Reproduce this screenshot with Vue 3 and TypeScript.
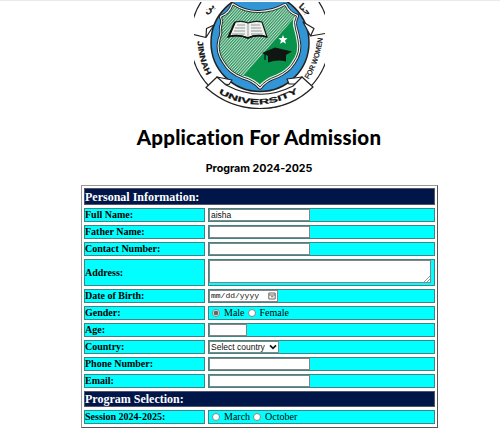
<script setup lang="ts">
import { ref } from 'vue'

type Kind = 'head' | 'text' | 'area' | 'date' | 'radio' | 'short' | 'select'
interface Row {
  label: string
  kind: Kind
  value?: string
  options?: string[]
  checked?: string
}

const rows = ref<Row[]>([
  { label: 'Personal Information:', kind: 'head' },
  { label: 'Full Name:', kind: 'text', value: 'aisha' },
  { label: 'Father Name:', kind: 'text', value: '' },
  { label: 'Contact Number:', kind: 'text', value: '' },
  { label: 'Address:', kind: 'area', value: '' },
  { label: 'Date of Birth:', kind: 'date' },
  { label: 'Gender:', kind: 'radio', options: ['Male', 'Female'], checked: 'Male' },
  { label: 'Age:', kind: 'short', value: '' },
  { label: 'Country:', kind: 'select' },
  { label: 'Phone Number:', kind: 'text', value: '' },
  { label: 'Email:', kind: 'text', value: '' },
  { label: 'Program Selection:', kind: 'head' },
  { label: 'Session 2024-2025:', kind: 'radio', options: ['March', 'October'], checked: '' },
])

const shield =
  'M233 5Q245 13 259 12.5Q273 12.5 285 5.5Q289 14 296.5 16Q293 22 295.5 29Q297 34 298 40Q301 52 293 63Q288 71 277 76Q265 80 260 87Q254 80 243 77Q230 72 224.5 62Q217 52 220 40Q223 33 221.5 27Q224 21 221.5 17Q230 14 233 5Z'
</script>

<template>
  <main class="page">
    <svg class="logo" viewBox="194 2 131 107" width="131" height="107">
      <defs>
        <pattern id="hatch" width="2.1" height="2.1" patternUnits="userSpaceOnUse" patternTransform="rotate(42)">
          <rect width="2.1" height="2.1" fill="#c3e2cf" />
          <rect width="1.15" height="2.1" fill="#2f9560" />
        </pattern>
        <clipPath id="shield"><path :d="shield" /></clipPath>
        <path id="ring-left" d="M197.5 41Q198.5 61 208 78" />
        <path id="ring-right" d="M308.5 79.5Q320 61 323 36" />
        <path id="ring-bottom" d="M218.5 93Q258 116 299 92" />
      </defs>
      <circle cx="260" cy="39" r="69.5" fill="#fff" stroke="#222" stroke-width="1.2" />
      <circle cx="260" cy="42.5" r="49" fill="#3295d5" stroke="#222" stroke-width="1.5" />
      <path :d="shield" fill="none" stroke="#222" stroke-width="5" stroke-linejoin="round" />
      <path :d="shield" fill="#08934b" stroke="#eef0ee" stroke-width="3.2" stroke-linejoin="round" />
      <g clip-path="url(#shield)">
        <path d="M205 0H310L240 80L205 95Z" fill="url(#hatch)" />
      </g>
      <path :d="shield" fill="none" stroke="#26382e" stroke-width="1" />
      <path d="M235 22Q243 20.5 248 23Q255 20.5 262 22L267 37Q256 34 248 38Q238 34 228 37Z" fill="#eef1ef" stroke="#161c18" stroke-width="1.2" />
      <path d="M248 23V37M237 25H245M235 28H245M234 31H245M232 34H245M251 25H260M251 28H261M251 31H262M251 34H263" stroke="#59625d" stroke-width=".6" />
      <path d="M235 22L229 36.5Q239 34 248 38Q257 34 267 37" fill="none" stroke="#111" stroke-width="1.8" />
      <path d="M283 35L284.2 38.1L287.6 38.3L285 40.5L285.9 43.7L283 41.9L280.1 43.7L281 40.5L278.4 38.3L281.8 38.1Z" fill="#fff" />
      <path d="M262 53L275 47.5L292 51.5L286 55V61.5Q278 59 268 62.5V56Z" fill="#101713" />
      <path d="M265 54V60" stroke="#101713" stroke-width="1.2" />
      <g fill="#fff" stroke="#222" stroke-width="1.2" stroke-linejoin="round">
        <path d="M193 34.5L206 37.5L214 25L206.5 28.5L206 37" />
        <path d="M325 33.5L310.5 36L303 22L314 28.5L310.5 36" />
        <path d="M217 77L232 80L229 84.5L222 84Z" />
        <path d="M302 77L287 79L289 84L298 84Z" />
        <path d="M217 77L206 87.5Q229 108.5 260 108.5Q291 108.5 313 87L302 77L293 86Q260 103 226 85Z" />
      </g>
      <g class="seal-text">
        <text font-size="7.8"><textPath href="#ring-left" textLength="36" lengthAdjust="spacingAndGlyphs">JINNAH</textPath></text>
        <text font-size="7.2" class="thin"><textPath href="#ring-right" textLength="44" lengthAdjust="spacingAndGlyphs">FOR WOMEN</textPath></text>
        <text font-size="7.6"><textPath href="#ring-bottom" textLength="84" lengthAdjust="spacingAndGlyphs">UNIVERSITY</textPath></text>
      </g>
      <text class="urdu" transform="translate(206 14) rotate(-38)">ین</text>
      <text class="urdu" transform="translate(298 7) rotate(42)">جنا</text>
    </svg>
    <h1>Application For Admission</h1>
    <h2>Program 2024-2025</h2>

    <form class="sheet" @submit.prevent>
      <template v-for="row in rows" :key="row.label">
        <div v-if="row.kind === 'head'" class="cell head">{{ row.label }}</div>
        <template v-else>
          <div class="cell label">{{ row.label }}</div>
          <div class="cell value" :class="row.kind">
            <input v-if="row.kind === 'text'" v-model="row.value" class="box" type="text" />
            <input v-else-if="row.kind === 'short'" v-model="row.value" class="box narrow" type="text" />
            <div v-else-if="row.kind === 'area'" class="box tall">
              <svg class="grip" viewBox="0 0 6 6" width="6" height="6"><path d="M0 6L6 0M3 6L6 3" stroke="#777" stroke-width=".8" /></svg>
            </div>
            <div v-else-if="row.kind === 'date'" class="box picker">
              <span>mm/dd/yyyy</span>
              <svg viewBox="0 0 8 8" width="8" height="8"><path d="M.8 1H7.2V7H.8ZM1 3H7M3 4.8H5.5" fill="none" stroke="#555" stroke-width=".9" /></svg>
            </div>
            <div v-else-if="row.kind === 'select'" class="box picker choice">
              <span>Select country</span>
              <svg viewBox="0 0 8 6" width="8" height="6"><path d="M1 1.3L4 4.3L7 1.3" fill="none" stroke="#111" stroke-width="1.7" /></svg>
            </div>
            <template v-else>
              <label v-for="option in row.options" :key="option" class="choice-label">
                <input v-model="row.checked" class="dot" type="radio" :name="row.label" :value="option" />{{ option }}
              </label>
            </template>
          </div>
        </template>
      </template>
    </form>
  </main>
</template>

<style>
body {
  margin: 0;
  background: #fff;
}
</style>

<style scoped>
.page {
  box-sizing: border-box;
  width: 500px;
  height: 431px;
  overflow: hidden;
  border-top: 1px solid #e9e9eb;
  padding-top: 1px;
  display: flex;
  flex-direction: column;
  align-items: center;
  color: #000;
}
.logo {
  flex: none;
  margin-left: 19px;
}
.seal-text {
  font-family: 'Liberation Sans', sans-serif;
  font-weight: 700;
  fill: #151515;
  stroke: #151515;
  stroke-width: 0.25px;
}
.thin {
  font-weight: 400;
}
.urdu {
  font: 700 9px 'DejaVu Sans', sans-serif;
  fill: #222;
}
h1 {
  margin: 16px 0 0 18px;
  font: 900 20.5px/24px Lato, sans-serif;
  letter-spacing: 0.2px;
  white-space: nowrap;
}
h2 {
  margin: 13px 0 0 18px;
  font: 700 10.7px/14px Inter, sans-serif;
  letter-spacing: -0.02px;
  white-space: nowrap;
}
.sheet {
  box-sizing: border-box;
  flex: none;
  width: 357px;
  height: 243px;
  margin: 9px 0 0 19px;
  padding: 2px;
  border: 1px solid #999;
  border-right-color: #555;
  border-bottom-color: #555;
  display: grid;
  grid-template-columns: 121px 1fr;
  grid-template-rows: 17px repeat(3, 14px) 27px repeat(6, 14px) 16px 14px;
  gap: 3px;
  font: 10px/12px 'Liberation Serif', serif;
}
.cell {
  box-sizing: border-box;
  min-width: 0;
  border: 1px solid #3c8686;
  background: #0ff;
  display: flex;
  align-items: center;
  white-space: nowrap;
}
.label {
  font-weight: 700;
}
.head {
  grid-column: 1 / -1;
  background: #001548;
  border-color: #55556a;
  color: #fff;
  font-weight: 700;
  font-size: 12px;
}
.box {
  box-sizing: border-box;
  width: 101px;
  height: 12px;
  margin: 0;
  padding: 0 1px;
  border: 1px solid #858585;
  border-radius: 0;
  outline: 0;
  background: #fff;
  color: #111;
  font: 8.5px/10px 'Liberation Sans', sans-serif;
  flex: none;
}
.narrow {
  width: 38px;
}
.tall {
  width: 222px;
  height: 23px;
  align-self: flex-start;
  display: flex;
  align-items: flex-end;
  justify-content: flex-end;
  padding: 0;
}
.picker {
  width: 69px;
  display: flex;
  align-items: center;
  justify-content: space-between;
}
.date .picker {
  font: 8px/10px 'Liberation Mono', monospace;
}
.choice {
  width: 70px;
}
.radio {
  padding-left: 3px;
  gap: 3px;
}
.choice-label {
  display: flex;
  align-items: center;
  gap: 4px;
}
.dot {
  appearance: none;
  box-sizing: border-box;
  width: 8px;
  height: 8px;
  margin: 0;
  border: 1px solid #858585;
  border-radius: 50%;
  background: #fff;
}
.dot:checked {
  background: radial-gradient(circle, #666 0 2px, #fff 2.7px);
}
</style>
